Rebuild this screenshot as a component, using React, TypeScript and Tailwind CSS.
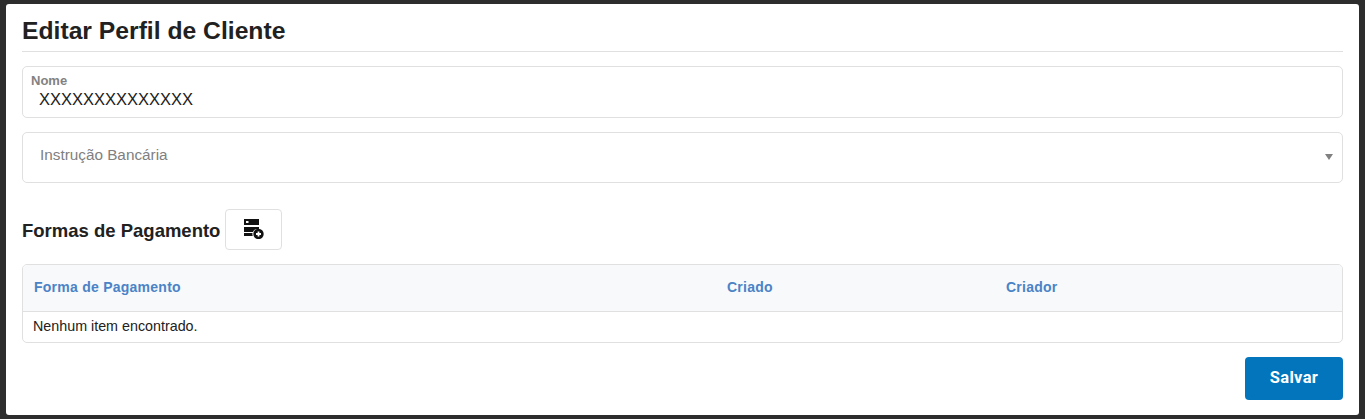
export default function App() {
  return (
    <div className="h-[419px] w-[1365px] overflow-hidden bg-[#2d2d2d] pt-[4px] pr-[6px] pb-[4px] pl-[6px] font-['Liberation_Sans',Arial,sans-serif] text-[#212121]">
      <div className="flex h-[411px] flex-col rounded-[3px] bg-white px-4">
        <h1 className="flex h-[48px] items-center border-b border-[#e0e0e0] pt-[7px] text-[24.7px] font-bold leading-[30px] text-[#212121]">
          Editar Perfil de Cliente
        </h1>
        <div className="mt-[14px] h-[52px] rounded-[5px] border border-[#e0e0e0] pl-2 pt-[7px]">
          <div className="text-[13px] font-bold leading-[14px] text-[#828282]">Nome</div>
          <div className="pl-2 pt-[1px] text-[16.5px] leading-[20px] text-[#212121]">XXXXXXXXXXXXXX</div>
        </div>
        <div className="mt-[14px] flex h-[51px] items-center justify-between rounded-[5px] border border-[#e0e0e0] pr-[9px] pl-[17px]">
          <span className="pb-[4px] text-[15.3px] text-[#808080]">Instrução Bancária</span>
          <svg width="8" height="6" viewBox="0 0 8 6" className="mb-[1px]">
            <path d="M0 0h8L4 6z" fill="#808080" />
          </svg>
        </div>
        <div className="mt-[26px] flex items-center">
          <h2 className="pt-[3px] text-[18.5px] font-bold leading-[22px] text-[#212121]">Formas de Pagamento</h2>
          <button className="ml-[5px] flex h-[41px] w-[57px] items-center justify-center rounded-[4px] border border-[#e0e0e0] bg-white pb-[1px]">
            <svg width="20" height="20" viewBox="0 0 20 20" className="ml-[1px]">
              <path d="M0 0h15v6H0zM0 8h15v2.500h-4a6 6 0 0 0-2 2.500H0z" fill="#111" />
              <path d="M0 14h8.500a6 6 0 0 0 .2 3H0z" fill="#111" />
              <rect x="2" y="2" width="2.500" height="2" fill="#fff" />
              <circle cx="14.500" cy="15" r="5.200" fill="#111" />
              <path d="M12 15h5M14.500 12.500v5" stroke="#fff" strokeWidth="1.800" />
            </svg>
          </button>
        </div>
        <div className="mt-[14px] h-[79px] overflow-hidden rounded-[5px] border border-[#e0e0e0]">
          <div className="grid h-[47px] grid-cols-[693px_279px_1fr] items-center border-b border-[#e0e0e0] bg-[#f8f9fb] pl-[11px] pb-[2px] text-[14px] font-bold tracking-[0.25px] text-[#4a83c6]">
            <span>Forma de Pagamento</span>
            <span>Criado</span>
            <span>Criador</span>
          </div>
          <div className="flex h-[30px] items-center pl-[10px] text-[14.3px] text-[#212121]">Nenhum item encontrado.</div>
        </div>
        <div className="mt-[14px] flex justify-end">
          <button className="h-[43px] w-[98px] rounded-[4px] bg-[#0275bd] font-['Roboto',sans-serif] text-[16.5px] font-bold tracking-[0.3px] text-white">
            Salvar
          </button>
        </div>
      </div>
    </div>
  );
}
